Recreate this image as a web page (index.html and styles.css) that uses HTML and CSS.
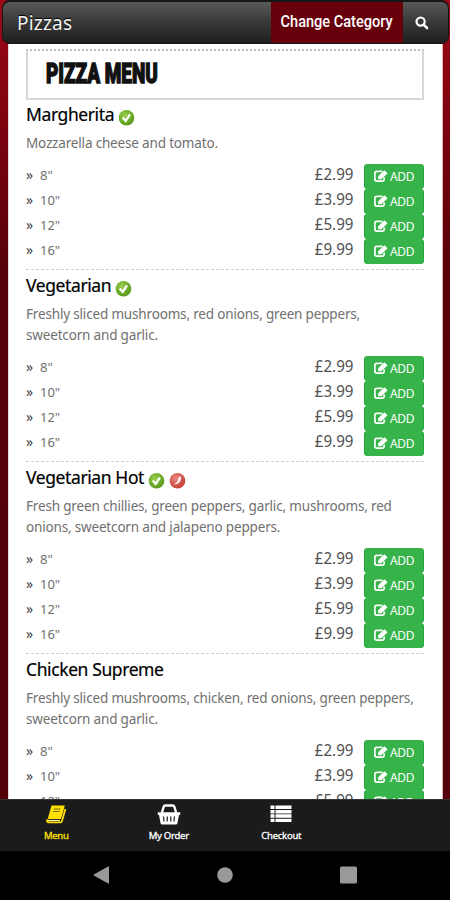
FILE: index.html
```html
<!DOCTYPE html>
<html lang="en">
<head>
<meta charset="utf-8">
<title>Pizzas</title>
<link rel="stylesheet" href="styles.css">
</head>
<body>
<svg class="defs" width="0" height="0">
  <defs>
    <radialGradient id="green" cx=".4" cy=".35" r=".7"><stop offset="0" stop-color="#9bcc50"/><stop offset=".65" stop-color="#69aa26"/><stop offset="1" stop-color="#579420"/></radialGradient>
    <radialGradient id="red" cx=".4" cy=".35" r=".7"><stop offset="0" stop-color="#eb8c82"/><stop offset=".65" stop-color="#d0524a"/><stop offset="1" stop-color="#bd453d"/></radialGradient>
  </defs>
  <symbol id="edit" viewBox="0 0 14 12"><path d="M10.2 7.6v1.700a1.800 1.800 0 0 1-1.800 1.800H2.700A1.800 1.800 0 0 1 .9 9.300V3.200a1.800 1.800 0 0 1 1.800-1.800h5.600" fill="none" stroke="#fff" stroke-width="1.700"/><path d="M4.200 9.200V6.200L10.400.2l3.200 3.100-6.200 5.900z" fill="#fff"/></symbol>
  <symbol id="veg" viewBox="0 0 17 17"><circle cx="8.500" cy="8.700" r="7.800" fill="url(#green)"/><path d="M4.700 8.400l3 3.500L12 5.400" fill="none" stroke="#fff" stroke-width="2.300"/></symbol>
  <symbol id="hot" viewBox="0 0 17 17"><circle cx="8.500" cy="8.700" r="7.800" fill="url(#red)"/><path d="M11.600 4c1.200 4.200-1.300 8.500-7 8.500 3-1.300 4.600-3.200 4.900-6.200 0-1 .9-1.800 2.100-2.300z" fill="#fff"/></symbol>
</svg>
<div class="app">
  <header class="bar">
    <h1 class="bar-title">Pizzas</h1>
    <div class="category"><span>Change Category</span></div>
    <div class="search"><svg width="14" height="14" viewBox="0 0 14 14"><circle cx="5.600" cy="5.600" r="4.100" fill="none" stroke="#fff" stroke-width="2.200"/><path d="M8.700 8.700l3.300 3.300" stroke="#fff" stroke-width="2.600" stroke-linecap="round"/></svg></div>
  </header>
  <main class="page">
    <div class="banner"><h2>PIZZA MENU</h2></div>

    <section class="item">
      <h3><span class="name">Margherita</span><svg><use href="#veg"/></svg></h3>
      <p>Mozzarella cheese and tomato.</p>
      <ul>
        <li><i>»</i><span class="size">8"</span><span class="price">£2.99</span><button><svg><use href="#edit"/></svg>ADD</button></li>
        <li><i>»</i><span class="size">10"</span><span class="price">£3.99</span><button><svg><use href="#edit"/></svg>ADD</button></li>
        <li><i>»</i><span class="size">12"</span><span class="price">£5.99</span><button><svg><use href="#edit"/></svg>ADD</button></li>
        <li><i>»</i><span class="size">16"</span><span class="price">£9.99</span><button><svg><use href="#edit"/></svg>ADD</button></li>
      </ul>
    </section>

    <section class="item">
      <h3><span class="name">Vegetarian</span><svg><use href="#veg"/></svg></h3>
      <p>Freshly sliced mushrooms, red onions, green peppers,<br>sweetcorn and garlic.</p>
      <ul>
        <li><i>»</i><span class="size">8"</span><span class="price">£2.99</span><button><svg><use href="#edit"/></svg>ADD</button></li>
        <li><i>»</i><span class="size">10"</span><span class="price">£3.99</span><button><svg><use href="#edit"/></svg>ADD</button></li>
        <li><i>»</i><span class="size">12"</span><span class="price">£5.99</span><button><svg><use href="#edit"/></svg>ADD</button></li>
        <li><i>»</i><span class="size">16"</span><span class="price">£9.99</span><button><svg><use href="#edit"/></svg>ADD</button></li>
      </ul>
    </section>

    <section class="item">
      <h3><span class="name">Vegetarian Hot</span><svg><use href="#veg"/></svg><svg><use href="#hot"/></svg></h3>
      <p>Fresh green chillies, green peppers, garlic, mushrooms, red<br>onions, sweetcorn and jalapeno peppers.</p>
      <ul>
        <li><i>»</i><span class="size">8"</span><span class="price">£2.99</span><button><svg><use href="#edit"/></svg>ADD</button></li>
        <li><i>»</i><span class="size">10"</span><span class="price">£3.99</span><button><svg><use href="#edit"/></svg>ADD</button></li>
        <li><i>»</i><span class="size">12"</span><span class="price">£5.99</span><button><svg><use href="#edit"/></svg>ADD</button></li>
        <li><i>»</i><span class="size">16"</span><span class="price">£9.99</span><button><svg><use href="#edit"/></svg>ADD</button></li>
      </ul>
    </section>

    <section class="item">
      <h3><span class="name">Chicken Supreme</span></h3>
      <p>Freshly sliced mushrooms, chicken, red onions, green peppers,<br>sweetcorn and garlic.</p>
      <ul>
        <li><i>»</i><span class="size">8"</span><span class="price">£2.99</span><button><svg><use href="#edit"/></svg>ADD</button></li>
        <li><i>»</i><span class="size">10"</span><span class="price">£3.99</span><button><svg><use href="#edit"/></svg>ADD</button></li>
        <li><i>»</i><span class="size">12"</span><span class="price">£5.99</span><button><svg><use href="#edit"/></svg>ADD</button></li>
      </ul>
    </section>
  </main>
  <nav class="tabs">
    <div class="tab active">
      <svg width="22" height="22" viewBox="0 0 22 22"><path d="M6.500 1.500h13.300L16 15H2.700z" fill="currentColor"/><path d="M2.400 15.300c-.8 1.600-.3 3.100 1.300 3.100h11.500c1 0 1.500-.5 1.800-1.500L20.400 5" fill="none" stroke="currentColor" stroke-width="1.800"/><path d="M8.700 5h6.800M8 7.500h6.800" stroke="#7d6e00" stroke-width="1"/><path d="M3 16.500h12" stroke="#fff3a0" stroke-width="1.200"/></svg>
      <span>Menu</span>
    </div>
    <div class="tab">
      <svg width="24" height="22" viewBox="0 0 24 22"><path d="M4.800 9l1.800-6.200q.4-1.300 1.800-1.300h7.200q1.400 0 1.800 1.300L19.200 9" fill="none" stroke="currentColor" stroke-width="2.400"/><path d="M.8 8.300h22.400v2.800H22l-1.500 7.800q-.3 1.600-1.900 1.600H5.400q-1.600 0-1.900-1.600L2 11.100H.8z" fill="currentColor"/><path d="M6.500 12.500l.5 5M10.200 12.500v5M13.800 12.500v5M17.500 12.500l-.5 5" stroke="#1b1b1b" stroke-width="1.200"/></svg>
      <span>My Order</span>
    </div>
    <div class="tab">
      <svg width="22" height="22" viewBox="0 0 22 22"><path d="M.5 1.500h4v3.500h-4zM5.500 1.500h16v3.500h-16zM.5 5.900h4v3.500h-4zM5.500 5.900h16v3.500h-16zM.5 10.300h4v3.500h-4zM5.500 10.300h16v3.500h-16zM.5 14.700h4v3.300h-4zM5.500 14.700h16v3.300h-16z" fill="currentColor"/></svg>
      <span>Checkout</span>
    </div>
    <div class="tab"></div>
  </nav>
  <footer class="system">
    <svg width="17" height="18" viewBox="0 0 17 18"><path d="M.8 9L15.500.8v16.400z" fill="#999" stroke="#999" stroke-linejoin="round"/></svg>
    <svg width="16" height="18" viewBox="0 0 16 18"><circle cx="8" cy="9" r="7.800" fill="#999"/></svg>
    <svg width="17" height="18" viewBox="0 0 17 18"><rect y=".5" width="17" height="17" rx="1.500" fill="#999"/></svg>
  </footer>
</div>
</body>
</html>
```
FILE: styles.css
```css
* { box-sizing: border-box; }
body { margin: 0; font-family: "Noto Sans", sans-serif; background: #000; }
.defs { position: absolute; }
.app { width: 450px; height: 900px; overflow: hidden; display: flex; flex-direction: column; background: linear-gradient(#9c0b18 0, #80030f 110px, #560009 270px, #52000a 100%); }
.bar { flex: none; height: 44px; margin: 0 1px 0 2px; display: flex; align-items: stretch; border: 1px solid #161616; border-top-width: 2px; border-radius: 8px; background: linear-gradient(#595959, #3b3b3b 45%, #1f1f1f); overflow: hidden; }
.bar-title { margin: 0; flex: 1; padding-left: 14px; font-size: 19px; line-height: 42px; font-weight: 400; color: #f4f4f4; text-shadow: 0 -1px 1px #000; letter-spacing: .2px; }
.category { width: 132px; background: #66000a; color: #fff; font: 500 16px/39px Roboto, sans-serif; text-align: center; white-space: nowrap; }
.category span { display: inline-block; transform: scaleX(.91); margin: 0 -6px; }
.search { width: 45px; padding: 11px 0 0 12px; }
.page { flex: none; width: 435px; height: 755px; margin-left: 8px; padding: 5px 17px 0; overflow: hidden; background: #fff; border-right: 1px solid #d8b4b6; border-left: 1px solid #e6d5d6; }
.banner { width: 398px; height: 51px; border: 2px solid #d8d8d8; border-top: 2px dotted #bbb; padding-left: 18px; }
.banner h2 { margin: 0; width: max-content; font: 900 27px/46px Roboto, sans-serif; color: #111; transform-origin: 0 50%; transform: scaleX(.7); -webkit-text-stroke: 1.400px #111; }
.item { width: 398px; padding: 3px 0 5px; border-bottom: 1px dashed #d0d0d0; }
.banner + .item { margin-top: -1px; }
.item h3 { margin: 0; height: 31px; display: flex; font-size: 17.500px; line-height: 25px; font-weight: 400; color: #000; -webkit-text-stroke: .2px #000; }
.item h3 svg { width: 17px; height: 17px; margin: 7px 0 0 4px; }
.name { white-space: nowrap; letter-spacing: -.4px; }
.item p { margin: 0 -10px 10px 0; font-size: 13.500px; line-height: 21px; letter-spacing: -.17px; color: #707070; white-space: nowrap; }
.item ul { list-style: none; margin: 0; padding: 0; }
.item li { display: flex; height: 25px; line-height: 22px; }
.item i { font-style: normal; width: 14px; font-size: 14px; color: #444; }
.size { flex: 1; font-size: 13px; color: #707070; line-height: 23px; }
.price { font-size: 17px; line-height: 20px; color: #505050; margin-right: 11px; transform: scaleX(.89); transform-origin: 100% 50%; }
button { width: 60px; height: 25px; border: 0; border-radius: 4px; padding: 0 0 1px; background: #36b449; color: #fff; font: 12px "Noto Sans", sans-serif; letter-spacing: -.4px; display: flex; align-items: center; justify-content: center; gap: 2px; box-shadow: inset 1px 0 #20aa3b, inset -1px 0 #20aa3b; }
button svg { width: 14px; height: 12px; }
.tabs { flex: none; height: 52px; display: grid; grid-template-columns: repeat(4, 1fr); background: #1b1b1b; border-top: 1px solid #333; }
.tab { display: flex; flex-direction: column; align-items: center; padding-top: 4px; color: #fff; font-size: 9.500px; line-height: 20px; letter-spacing: -.25px; -webkit-text-stroke: .3px currentColor; }
.tab svg { flex: none; }
.tab.active { color: #ffe000; }
.system { flex: none; height: 49px; background: #000; display: flex; justify-content: space-between; padding: 15px 93px 0; }
```
